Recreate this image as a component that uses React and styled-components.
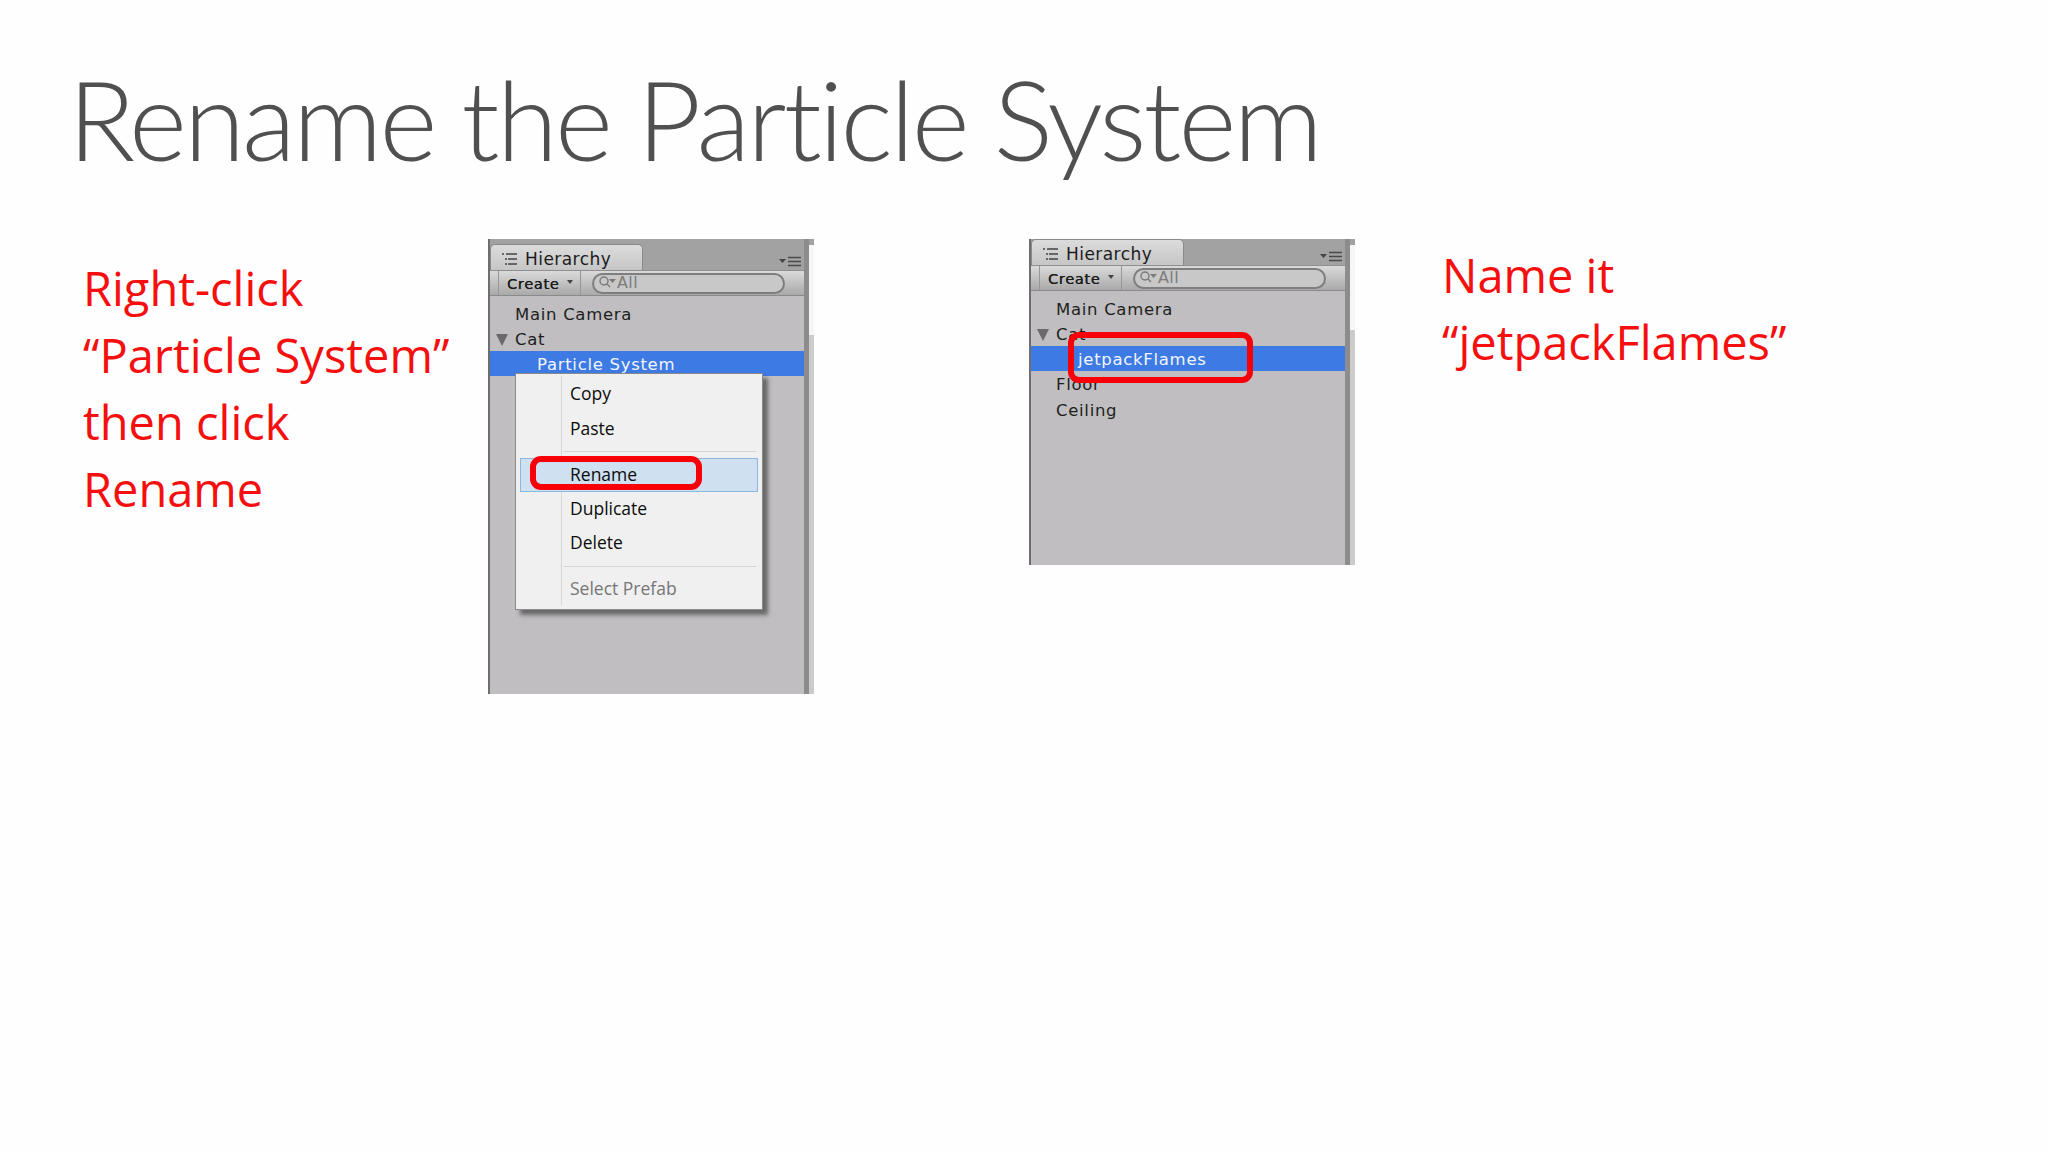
import React from "react";
import styled, { createGlobalStyle } from "styled-components";

const GlobalStyle = createGlobalStyle`
  html, body { margin: 0; padding: 0; background: #fefefe; }
`;

const Slide = styled.div`
  width: 2048px;
  height: 1152px;
  overflow: hidden;
  background: #fefefe;
  font-family: "Open Sans", "Noto Sans", sans-serif;
`;

const Title = styled.h1`
  margin: 0;
  height: 239px;
  box-sizing: border-box;
  padding: 50px 0 0 68px;
  font-family: "Lato", "Open Sans", sans-serif;
  font-size: 111px;
  line-height: 136px;
  font-weight: 300;
  letter-spacing: -2.9px;
  color: #505050;
  white-space: nowrap;
`;

const Content = styled.div`
  display: flex;
  align-items: flex-start;
  padding-left: 83px;
`;

const Note = styled.div`
  flex: none;
  width: ${(p) => p.$width}px;
  margin-left: ${(p) => p.$left || 0}px;
  padding-top: ${(p) => p.$top}px;
  font-size: 47px;
  line-height: 67px;
  color: #f50f0f;
  white-space: nowrap;
`;

const Panel = styled.div`
  position: relative;
  flex: none;
  width: 326px;
  height: ${(p) => p.$height}px;
  margin-left: ${(p) => p.$left || 0}px;
  box-sizing: border-box;
  display: flex;
  flex-direction: column;
  padding-right: 10px;
  background: #c0bec0;
  border-left: 2px solid #6e6e6e;
  font-family: "DejaVu Sans", sans-serif;
  &::after {
    content: "";
    position: absolute;
    top: 0;
    right: 0;
    bottom: 0;
    width: 10px;
    box-sizing: border-box;
    border-left: 5px solid #8c8c8c;
    background: linear-gradient(#a2a2a2 0 6px, #f6f6f6 6px ${(p) => p.$split}px, #cbcbcb ${(p) => p.$split}px);
  }
`;

const TabStrip = styled.div`
  flex: none;
  height: ${(p) => p.$height}px;
  display: flex;
  align-items: flex-end;
  justify-content: space-between;
  padding-right: 3px;
  background: #a2a2a2;
`;

const Tab = styled.div`
  width: 153px;
  height: 26px;
  box-sizing: border-box;
  display: flex;
  align-items: center;
  gap: 8px;
  padding: 2px 0 0 11px;
  background: linear-gradient(#dcdcdc, #c6c6c6);
  border: 1px solid #8a8a8a;
  border-bottom: none;
  border-radius: 5px 5px 0 0;
  font-size: 17px;
  letter-spacing: 0.45px;
  color: #1c1c1c;
`;

const Toolbar = styled.div`
  flex: none;
  height: 26px;
  box-sizing: border-box;
  display: flex;
  align-items: center;
  background: linear-gradient(#dadada, #a9a9a9);
  border-top: 1px solid #8f8f8f;
  border-bottom: 1px solid #8a8a8a;
`;

const CreateButton = styled.div`
  width: 83px;
  height: 100%;
  margin-left: 8px;
  box-sizing: border-box;
  display: flex;
  align-items: center;
  gap: 8px;
  padding: 2px 0 0 8px;
  border-left: 1px solid #969696;
  border-right: 1px solid #969696;
  font-size: 14.5px;
  letter-spacing: 0.7px;
  color: #1a1a1a;
  text-shadow: 0.3px 0 0 #1a1a1a;
`;

const Caret = styled.span`
  width: 0;
  height: 0;
  margin-top: -4px;
  border-left: 3px solid transparent;
  border-right: 3px solid transparent;
  border-top: 4px solid #444;
`;

const SearchPill = styled.div`
  width: 193px;
  height: 21px;
  margin-left: 11px;
  box-sizing: border-box;
  display: flex;
  align-items: center;
  padding: 0 0 2px 4px;
  border: 2px solid #7e7e7e;
  border-radius: 11px;
  background: #c8c8c8;
  font-size: 16px;
  letter-spacing: 0.4px;
  color: #7c7c7c;
`;

const List = styled.div`
  padding-top: 6px;
`;

const Row = styled.div`
  height: ${(p) => p.$h || 25}px;
  display: flex;
  align-items: center;
  box-sizing: border-box;
  padding-left: ${(p) => (p.$child ? 47 : 25)}px;
  padding-top: ${(p) => (p.$selected ? 2 : 0)}px;
  font-size: 16.5px;
  letter-spacing: 0.7px;
  white-space: nowrap;
  position: relative;
  color: ${(p) => (p.$selected ? "#f2f6ff" : "#1e1e1e")};
  background: ${(p) => (p.$selected ? "#3e7ae3" : "transparent")};
`;

const Arrow = styled.span`
  position: absolute;
  left: 6px;
  top: 7px;
  width: 0;
  height: 0;
  border-left: 6.5px solid transparent;
  border-right: 6.5px solid transparent;
  border-top: 12px solid #6a6a6a;
`;

const Menu = styled.div`
  position: absolute;
  left: 25px;
  top: 134px;
  width: 248px;
  height: 237px;
  box-sizing: border-box;
  padding: 3px 2px 2px;
  background: #f0f0f0;
  border: 1px solid #8a8a8a;
  box-shadow: 5px 5px 4px rgba(60, 60, 60, 0.65);
  font-family: "Open Sans", "Noto Sans", sans-serif;
  &::before {
    content: "";
    position: absolute;
    left: 45px;
    top: 2px;
    bottom: 4px;
    width: 1px;
    background: #d8d8d8;
  }
`;

const MenuItem = styled.div`
  position: relative;
  height: ${(p) => p.$h || 34}px;
  box-sizing: border-box;
  display: flex;
  align-items: center;
  padding: 0 0 2px 50px;
  margin: 0 2px;
  font-size: 17.5px;
  color: ${(p) => (p.$disabled ? "#767676" : "#0c0c0c")};
  background: ${(p) => (p.$active ? "#cfe0f0" : "transparent")};
  outline: ${(p) => (p.$active ? "1px solid #8ab8e0" : "none")};
  outline-offset: -1px;
`;

const MenuDivider = styled.div`
  height: 1px;
  margin: ${(p) => p.$margin};
  background: #d4d4d4;
`;

const RedBox = styled.div`
  position: absolute;
  left: ${(p) => p.$x}px;
  top: ${(p) => p.$y}px;
  width: ${(p) => p.$w}px;
  height: ${(p) => p.$h}px;
  box-sizing: border-box;
  border: 6px solid #f80008;
  border-radius: 11px;
`;

const HierarchyIcon = () => (
  <svg width="15" height="12" viewBox="0 0 15 12" fill="none" stroke="#444" strokeWidth="1.3">
    <path d="M0 1h2M4 1h11M3 6h2M6 6h9M3 11h2M6 11h9" />
  </svg>
);

const MenuIcon = styled.svg`
  margin-bottom: 3px;
`;

const PaneMenu = () => (
  <MenuIcon width="22" height="11" viewBox="0 0 22 11">
    <path d="M0 3h7l-3.5 4z" fill="#444" />
    <path d="M9 1.5h13M9 5.5h13M9 9.5h13" stroke="#4a4a4a" strokeWidth="1.4" />
  </MenuIcon>
);

const SearchGlass = () => (
  <svg width="19" height="14" viewBox="0 0 19 14" fill="none" stroke="#7a7a7a" strokeWidth="1.4">
    <circle cx="6" cy="6" r="4" />
    <path d="M9 9l3 3" />
    <path d="M11 4h7l-3.5 4z" fill="#7a7a7a" stroke="none" />
  </svg>
);

const Hierarchy = ({ stripHeight, height, left, split, children }) => (
  <Panel $height={height} $left={left} $split={split}>
    <TabStrip $height={stripHeight}>
      <Tab>
        <HierarchyIcon />
        Hierarchy
      </Tab>
      <PaneMenu />
    </TabStrip>
    <Toolbar>
      <CreateButton>
        Create
        <Caret />
      </CreateButton>
      <SearchPill>
        <SearchGlass />
        All
      </SearchPill>
    </Toolbar>
    {children}
  </Panel>
);

export default function App() {
  return (
    <Slide>
      <GlobalStyle />
      <Title>Rename the Particle System</Title>
      <Content>
        <Note $width={405} $top={16}>
          Right-click
          <br />
          “Particle System”
          <br />
          then click
          <br />
          Rename
        </Note>
        <Hierarchy stripHeight={31} height={455} split={96}>
          <List>
            <Row>Main Camera</Row>
            <Row $h={24}>
              <Arrow />
              Cat
            </Row>
            <Row $selected $child>
              Particle System
            </Row>
          </List>
          <Menu>
            <MenuItem>Copy</MenuItem>
            <MenuItem $h={35}>Paste</MenuItem>
            <MenuDivider $margin="5px 4px 6px 46px" />
            <MenuItem $active>Rename</MenuItem>
            <MenuItem>Duplicate</MenuItem>
            <MenuItem>Delete</MenuItem>
            <MenuDivider $margin="6px 4px 5px 46px" />
            <MenuItem $disabled>Select Prefab</MenuItem>
          </Menu>
          <RedBox $x={40} $y={217} $w={172} $h={34} />
        </Hierarchy>
        <Hierarchy stripHeight={26} height={326} left={215} split={91}>
          <List>
            <Row>Main Camera</Row>
            <Row $h={24}>
              <Arrow />
              Cat
            </Row>
            <Row $selected $child>
              jetpackFlames
            </Row>
            <Row $h={26}>Floor</Row>
            <Row $h={26}>Ceiling</Row>
          </List>
          <RedBox $x={37} $y={93} $w={185} $h={51} />
        </Hierarchy>
        <Note $width={420} $left={87} $top={3}>
          Name it
          <br />
          “jetpackFlames”
        </Note>
      </Content>
    </Slide>
  );
}
